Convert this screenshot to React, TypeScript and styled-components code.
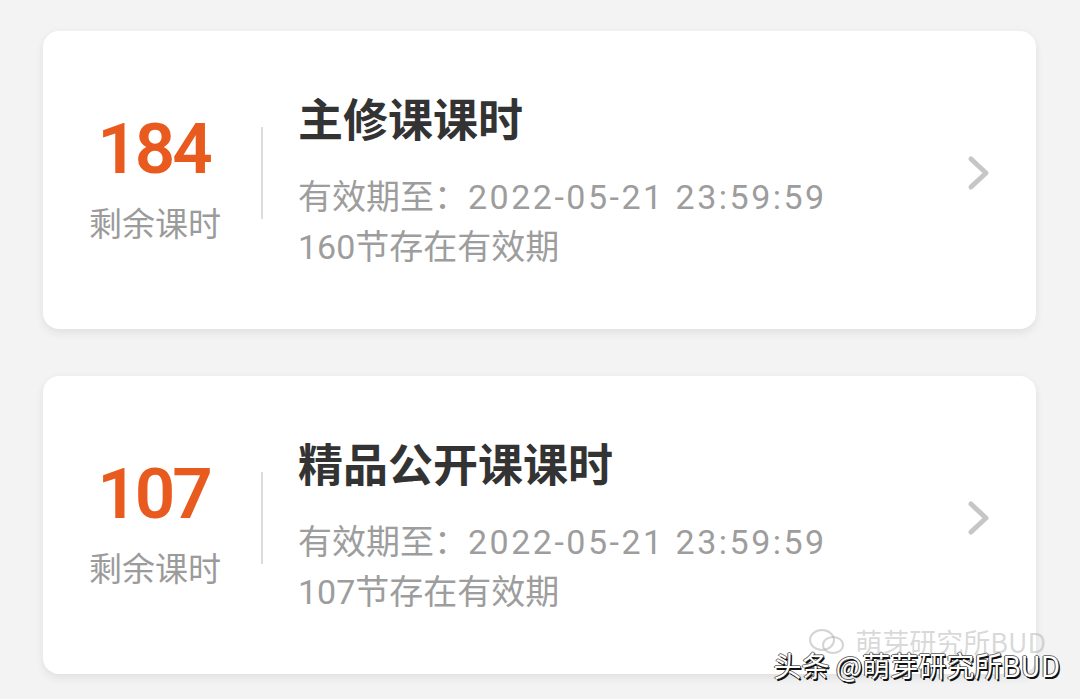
import React from "react";
import styled, { createGlobalStyle } from "styled-components";

const Global = createGlobalStyle`
  html, body { margin: 0; padding: 0; background: #f3f3f3; }
  body { font-family: "Noto Sans CJK SC", sans-serif; }
  * { box-sizing: border-box; }
`;

const Page = styled.div`
  position: relative;
  width: 1080px;
  height: 699px;
  overflow: hidden;
  padding: 31px 44px 0 43px;
  display: flex;
  flex-direction: column;
  gap: 47px;
  background: #f3f3f3;
`;

const Card = styled.div`
  height: 298px;
  background: #fff;
  border-radius: 16px;
  box-shadow: 0 5px 10px rgba(0, 0, 0, 0.06), 0 0 8px rgba(0, 0, 0, 0.03);
  display: flex;
  align-items: center;
  padding: 0 0 8px 6px;
`;

const Left = styled.div`
  width: 212px;
  display: flex;
  flex-direction: column;
  align-items: center;
  gap: 21px;
`;

const Count = styled.div`
  font-family: "Roboto", "Liberation Sans", sans-serif;
  font-weight: 600;
  font-size: 71px;
  line-height: 72px;
  letter-spacing: -3px;
  color: #e95a1e;
  padding-right: 3px;
`;

const CountLabel = styled.div`
  font-size: 33px;
  line-height: 33px;
  color: #9b9b9b;
`;

const Divider = styled.div`
  width: 2px;
  height: 92px;
  background: #dcdcdc;
  margin-bottom: 6px;
  flex-shrink: 0;
`;

const Info = styled.div`
  flex: 1;
  padding: 14px 0 0 35px;
  display: flex;
  flex-direction: column;
`;

const Title = styled.div`
  font-size: 45px;
  line-height: 45px;
  font-weight: 700;
  color: #333;
  margin-bottom: 32px;
`;

const Line = styled.div`
  font-family: "Roboto", "Noto Sans CJK SC", sans-serif;
  font-size: 34px;
  line-height: 50px;
  color: #9d9d9d;
  white-space: nowrap;
`;

const DateText = styled.span`
  letter-spacing: 2.5px;
`;

const Chevron = styled.svg`
  width: 24px;
  height: 36px;
  margin: 0 45px 6px 0;
  flex-shrink: 0;
`;

const Watermark = styled.div`
  position: absolute;
  right: 20px;
  bottom: 18px;
  font-size: 28px;
  line-height: 32px;
  color: #fff;
  text-shadow: 1.5px 1.5px 0 #111, -1px 0 0 #555, 0 -1px 0 #777, 1px 0 0 #333;
  white-space: nowrap;
  font-family: "Noto Sans CJK SC", sans-serif;
`;

const Ghost = styled.div`
  position: absolute;
  right: 34px;
  bottom: 42px;
  display: flex;
  align-items: center;
  gap: 8px;
  font-size: 27px;
  line-height: 30px;
  color: rgba(170, 170, 170, 0.45);
  white-space: nowrap;
`;

const courses = [
  { count: "184", title: "主修课课时", date: "2022-05-21 23:59:59", valid: "160节存在有效期" },
  { count: "107", title: "精品公开课课时", date: "2022-05-21 23:59:59", valid: "107节存在有效期" },
];

export default function App() {
  return (
    <>
      <Global />
      <Page>
        {courses.map((c) => (
          <Card key={c.count}>
            <Left>
              <Count>{c.count}</Count>
              <CountLabel>剩余课时</CountLabel>
            </Left>
            <Divider />
            <Info>
              <Title>{c.title}</Title>
              <Line>
                有效期至：<DateText>{c.date}</DateText>
              </Line>
              <Line>{c.valid}</Line>
            </Info>
            <Chevron viewBox="0 0 24 36">
              <path d="M4 4 L19 18 L4 32" fill="none" stroke="#c6c6c6" strokeWidth="5" strokeLinecap="round" strokeLinejoin="round" />
            </Chevron>
          </Card>
        ))}
        <Ghost>
          <svg width="40" height="30" viewBox="0 0 40 30">
            <ellipse cx="15" cy="13" rx="12" ry="10" fill="none" stroke="rgba(170,170,170,0.5)" strokeWidth="2" />
            <ellipse cx="26" cy="18" rx="10" ry="8" fill="none" stroke="rgba(170,170,170,0.5)" strokeWidth="2" />
          </svg>
          萌芽研究所BUD
        </Ghost>
        <Watermark>头条 @萌芽研究所BUD</Watermark>
      </Page>
    </>
  );
}
